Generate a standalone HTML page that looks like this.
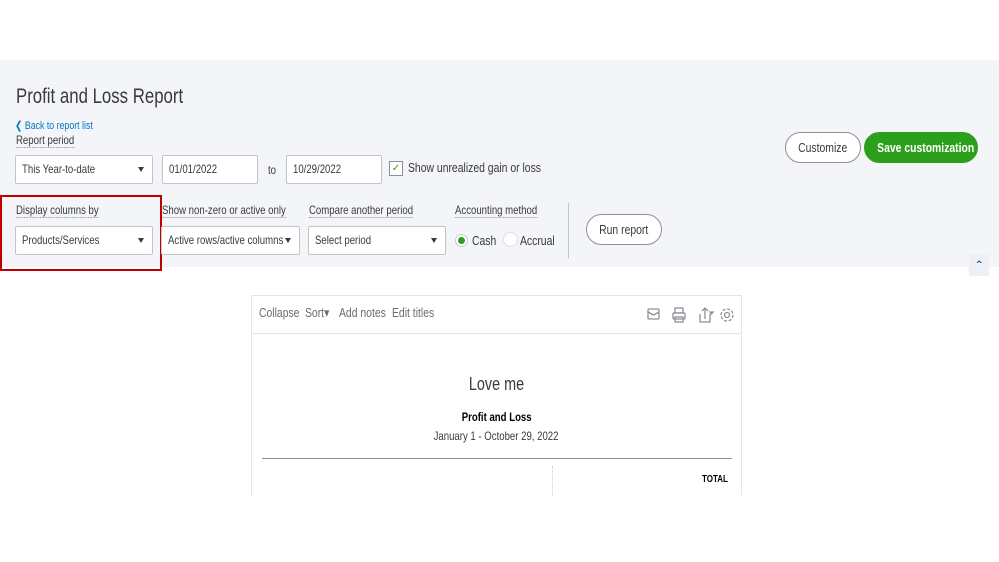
<!DOCTYPE html>
<html><head><meta charset="utf-8"><style>
*{margin:0;padding:0;box-sizing:border-box}
body{width:999px;height:562px;background:#fff;position:relative;overflow:hidden;font-family:"Liberation Sans",sans-serif;color:#393a3d}
.a{position:absolute;white-space:nowrap}
.n{display:inline-block;transform:scaleX(.8);transform-origin:left center;white-space:nowrap}
.c{display:inline-block;transform:scaleX(.8);transform-origin:center center;white-space:nowrap}
.band{left:0;top:60px;width:999px;height:207px;background:#f4f5f8}
.lbl{font-size:12px;color:#393a3d;line-height:14px}
.lbl .n{border-bottom:1px dotted #8d9096}
.box{background:#fff;border:1px solid #c1c4c8;border-radius:2px;height:29px;font-size:12px;line-height:27px;padding-left:6px;color:#393a3d}
.tri{position:absolute;right:8px;top:11px;width:0;height:0;border-left:3.5px solid transparent;border-right:3.5px solid transparent;border-top:5px solid #393a3d}
.btn{border:1px solid #8d9096;border-radius:16px;background:#fff;font-size:13px;text-align:center;line-height:29px;height:31px}
.tb{font-size:13px;color:#6b6c72}
</style></head><body>
<div class="a band"></div>
<div class="a" style="left:16px;top:85px;font-size:21px;color:#393a3d"><span class="n">Profit and Loss Report</span></div>
<div class="a" style="left:15px;top:119px;font-size:11px;color:#0077c5"><span class="n">&#10094; Back to report list</span></div>
<div class="a lbl" style="left:16px;top:133px"><span class="n">Report period</span></div>
<div class="a box" style="left:15px;top:155px;width:138px"><span class="n">This Year-to-date</span><span class="tri"></span></div>
<div class="a box" style="left:162px;top:155px;width:96px"><span class="n">01/01/2022</span></div>
<div class="a" style="left:268px;top:163px;font-size:12px"><span class="n">to</span></div>
<div class="a box" style="left:286px;top:155px;width:96px"><span class="n">10/29/2022</span></div>
<div class="a" style="left:389px;top:161px;width:14px;height:15px;border:1px solid #8d9096;background:#fff;font-size:10px;color:#2ca01c;text-align:center;line-height:13px">&#10003;</div>
<div class="a" style="left:408px;top:160px;font-size:13px"><span class="n">Show unrealized gain or loss</span></div>
<div class="a btn" style="left:785px;top:132px;width:76px"><span class="c">Customize</span></div>
<div class="a btn" style="left:864px;top:132px;width:114px;background:#2ca01c;border-color:#2ca01c;color:#fff;font-weight:bold"><span class="c">Save customization</span></div>
<div class="a" style="left:0;top:195px;width:162px;height:76px;border:2px solid #c00000"></div>
<div class="a lbl" style="left:16px;top:203px"><span class="n">Display columns by</span></div>
<div class="a box" style="left:15px;top:226px;width:138px"><span class="n">Products/Services</span><span class="tri"></span></div>
<div class="a lbl" style="left:162px;top:203px"><span class="n">Show non-zero or active only</span></div>
<div class="a box" style="left:161px;top:226px;width:139px"><span class="n">Active rows/active columns</span><span class="tri"></span></div>
<div class="a lbl" style="left:309px;top:203px"><span class="n">Compare another period</span></div>
<div class="a box" style="left:308px;top:226px;width:138px"><span class="n">Select period</span><span class="tri"></span></div>
<div class="a lbl" style="left:455px;top:203px"><span class="n">Accounting method</span></div>
<div class="a" style="left:455px;top:234px;width:13px;height:13px;border-radius:50%;background:#fff;border:1px solid #ccc"><div style="margin:2px;width:7px;height:7px;border-radius:50%;background:#2ca01c"></div></div>
<div class="a" style="left:472px;top:233px;font-size:13px"><span class="n">Cash</span></div>
<div class="a" style="left:503px;top:232px;width:15px;height:15px;border-radius:50%;background:#fff;border:1px solid #ddd"></div>
<div class="a" style="left:520px;top:233px;font-size:13px"><span class="n">Accrual</span></div>
<div class="a" style="left:568px;top:203px;width:1px;height:55px;background:#c1c4c8"></div>
<div class="a btn" style="left:586px;top:214px;width:76px"><span class="c">Run report</span></div>
<div class="a" style="left:969px;top:254px;width:20px;height:22px;background:#eef0f5;color:#0d5ca3;font-size:14px;text-align:center;line-height:24px;font-weight:bold">&#710;</div>
<div class="a" style="left:251px;top:295px;width:491px;height:200px;border:1px solid #e3e5e8;border-bottom:none;background:#fff"></div>
<div class="a" style="left:251px;top:333px;width:491px;height:1px;background:#e3e5e8"></div>
<div class="a tb" style="left:259px;top:305px"><span class="n">Collapse</span></div>
<div class="a tb" style="left:305px;top:305px"><span class="n">Sort&#9662;</span></div>
<div class="a tb" style="left:339px;top:305px"><span class="n">Add notes</span></div>
<div class="a tb" style="left:392px;top:305px"><span class="n">Edit titles</span></div>
<svg class="a" style="left:645px;top:306px" width="95" height="18" fill="none" stroke="#8d9096" stroke-width="1.3">
<rect x="3" y="3" width="11" height="10" rx="1"/><path d="M3 6l5.5 3 5.5-3"/>
<rect x="28" y="7" width="12" height="6" rx="1"/><rect x="30" y="2" width="8" height="5"/><rect x="30" y="11" width="8" height="5"/>
<path d="M55 8v8h10v-8M60 13V2M57 5l3-3 3 3"/><path d="M65 6l3 0-1.5 2z" fill="#8d9096"/>
<circle cx="82" cy="9" r="2.5"/><circle cx="82" cy="9" r="6" stroke-dasharray="3 1.7"/>
</svg>
<div class="a" style="left:251px;top:374px;width:491px;text-align:center;font-size:18px;color:#393a3d"><span class="c">Love me</span></div>
<div class="a" style="left:251px;top:410px;width:491px;text-align:center;font-size:12px;font-weight:bold;color:#000"><span class="c">Profit and Loss</span></div>
<div class="a" style="left:251px;top:429px;width:491px;text-align:center;font-size:12px"><span class="c">January 1 - October 29, 2022</span></div>
<div class="a" style="left:262px;top:458px;width:470px;height:1px;background:#8d9096"></div>
<div class="a" style="left:552px;top:466px;width:1px;height:30px;border-left:1px dotted #ccc"></div>
<div class="a" style="left:702px;top:474px;font-size:10px;font-weight:bold;color:#000"><span class="n">TOTAL</span></div>
</body></html>
